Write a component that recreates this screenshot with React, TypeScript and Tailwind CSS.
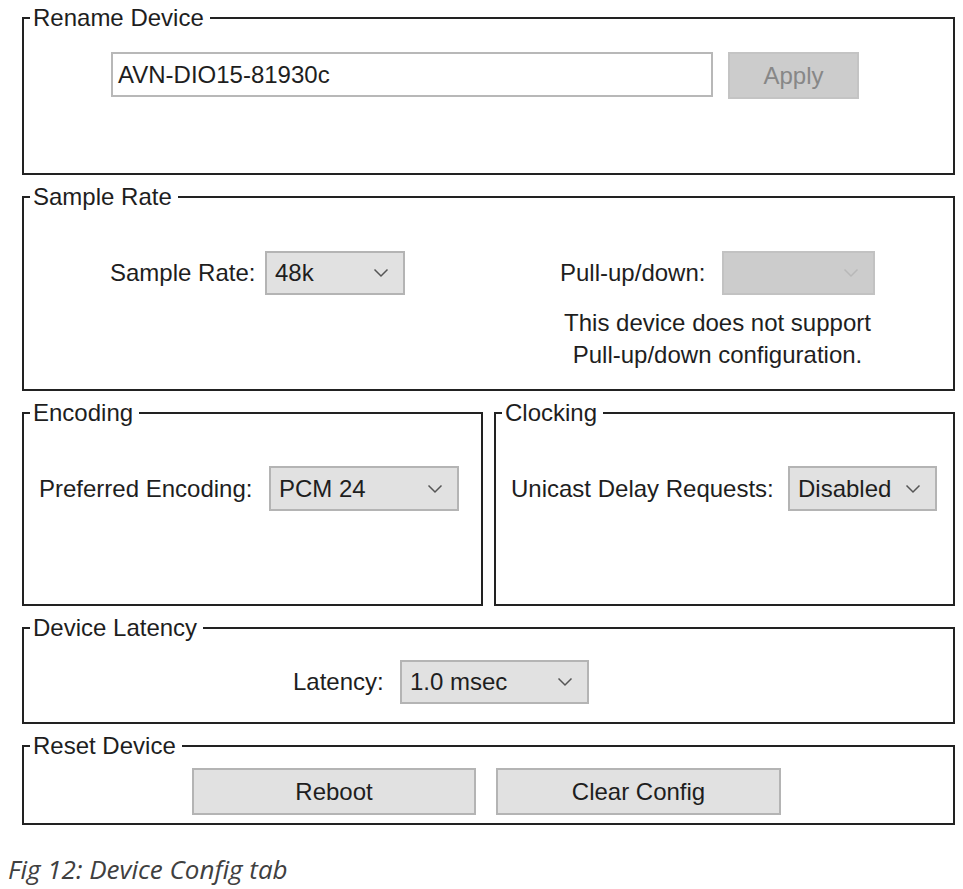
import React from 'react';

const Chevron = ({ muted = false }: { muted?: boolean }) => (
  <svg width="16" height="10" viewBox="0 0 16 10" className="shrink-0">
    <polyline
      points="1.5,1.5 8,8 14.5,1.5"
      fill="none"
      stroke={muted ? '#b8b8b8' : '#555'}
      strokeWidth="1.5"
    />
  </svg>
);

const Group = ({
  title,
  className = '',
  children,
}: {
  title: string;
  className?: string;
  children: React.ReactNode;
}) => (
  <fieldset className={`border-2 border-[#222] ${className}`}>
    <legend className="ml-[6px] pl-[3px] pr-[6px] text-[24px] leading-[28px]">{title}</legend>
    {children}
  </fieldset>
);

const Select = ({
  value,
  width,
  disabled = false,
}: {
  value?: string;
  width: string;
  disabled?: boolean;
}) => (
  <div
    className={`flex h-[44px] items-center justify-between border-2 pl-[8px] pr-[14px] ${width} ${
      disabled ? 'border-[#c2c2c2] bg-[#cccccc]' : 'border-[#b4b4b4] bg-[#e1e1e1]'
    }`}
  >
    <span>{value}</span>
    <Chevron muted={disabled} />
  </div>
);

export default function App() {
  return (
    <div className="min-h-[889px] bg-white text-[24px] text-[#1e1e1e] font-['Liberation_Sans',sans-serif]">
      <div className="ml-[22px] flex w-[933px] flex-col gap-[8px] pt-[4px]">
        {/* Rename */}
        <Group title="Rename Device">
          <div className="flex h-[141px] items-start gap-[15px] pl-[87px] pt-[20px]">
            <div className="flex h-[45px] w-[602px] items-center border-2 border-[#b8b8b8] bg-white pl-[5px]">
              AVN-DIO15-81930c
            </div>
            <button className="h-[47px] w-[131px] border-2 border-[#c4c4c4] bg-[#cccccc] text-[#878787]">
              Apply
            </button>
          </div>
        </Group>

        {/* Sample rate */}
        <Group title="Sample Rate">
          <div className="grid h-[178px] grid-cols-[536px_1fr] pt-[40px]">
            <div className="flex items-start pl-[86px]">
              <span className="w-[155px] leading-[44px]">Sample Rate:</span>
              <Select value="48k" width="w-[140px]" />
            </div>
            <div className="flex w-[315px] flex-col items-center">
              <div className="flex items-center">
                <span className="w-[162px] leading-[44px]">Pull-up/down:</span>
                <Select width="w-[153px]" disabled />
              </div>
              <p className="mt-[12px] text-center leading-[32px]">
                This device does not support
                <br />
                Pull-up/down configuration.
              </p>
            </div>
          </div>
        </Group>

        {/* Encoding + Clocking */}
        <div className="grid grid-cols-2 gap-[11px]">
          <Group title="Encoding">
            <div className="flex h-[177px] items-start pl-[15px] pt-[39px]">
              <span className="w-[230px] leading-[45px]">Preferred Encoding:</span>
              <Select value="PCM 24" width="w-[190px] h-[45px]" />
            </div>
          </Group>
          <Group title="Clocking">
            <div className="flex h-[177px] items-start pl-[15px] pt-[39px]">
              <span className="w-[277px] leading-[45px]">Unicast Delay Requests:</span>
              <Select value="Disabled" width="w-[149px] h-[45px]" />
            </div>
          </Group>
        </div>

        {/* Latency */}
        <Group title="Device Latency">
          <div className="flex h-[80px] items-start pl-[269px] pt-[18px]">
            <span className="w-[107px] leading-[44px]">Latency:</span>
            <Select value="1.0 msec" width="w-[189px]" />
          </div>
        </Group>

        {/* Reset */}
        <Group title="Reset Device">
          <div className="flex h-[63px] items-start gap-[20px] pl-[168px] pt-[8px]">
            <button className="h-[47px] w-[284px] border-2 border-[#b4b4b4] bg-[#e1e1e1]">Reboot</button>
            <button className="h-[47px] w-[285px] border-2 border-[#b4b4b4] bg-[#e1e1e1]">Clear Config</button>
          </div>
        </Group>
      </div>

      <p className="ml-[8px] mt-[25px] text-[26px] italic text-[#404040] font-['Open_Sans',sans-serif]">
        Fig 12: Device Config tab
      </p>
    </div>
  );
}
